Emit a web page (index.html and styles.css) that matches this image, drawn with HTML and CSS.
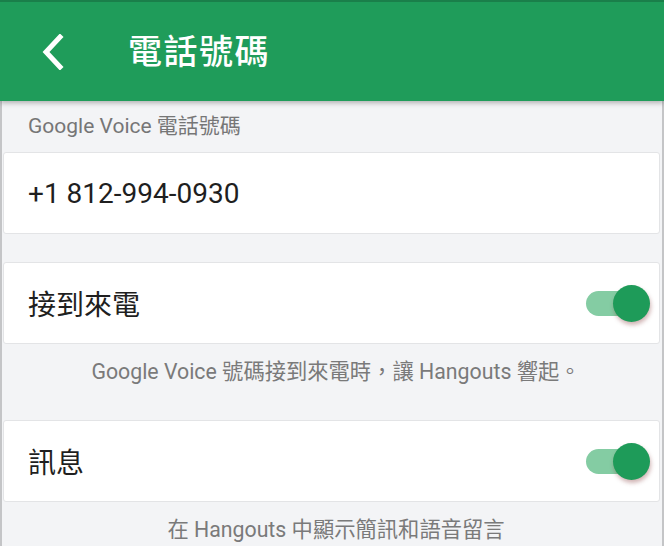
FILE: index.html
```html
<!DOCTYPE html>
<html lang="zh-Hant">
<head>
<meta charset="utf-8">
<title>電話號碼</title>
<link rel="stylesheet" href="styles.css">
</head>
<body>
<div class="page">
  <header class="appbar">
    <button class="back" aria-label="返回">
      <svg width="24" height="36" viewBox="0 0 24 36"><path d="M19 3 L5 18 L19 33" fill="none" stroke="#fff" stroke-width="5" stroke-linecap="square" stroke-linejoin="miter"/></svg>
    </button>
    <h1 class="title">電話號碼</h1>
  </header>
  <main class="content">
    <div class="section-label">Google Voice 電話號碼</div>
    <div class="card">
      <span class="card-text">+1 812-994-0930</span>
    </div>
    <div class="card card-gap">
      <span class="card-text">接到來電</span>
      <span class="toggle on"><span class="track"></span><span class="thumb"></span></span>
    </div>
    <div class="helper">Google Voice 號碼接到來電時，讓 Hangouts 響起。</div>
    <div class="card card-gap2">
      <span class="card-text">訊息</span>
      <span class="toggle on"><span class="track"></span><span class="thumb"></span></span>
    </div>
    <div class="helper">在 Hangouts 中顯示簡訊和語音留言</div>
  </main>
</div>
</body>
</html>
```
FILE: styles.css
```css
html, body {
  margin: 0;
  padding: 0;
  height: 100%;
}
body {
  background: #f3f4f6;
  font-family: Roboto, "Noto Sans CJK TC", sans-serif;
  overflow: hidden;
}
.page {
  height: 546px;
  border-left: 2px solid #c4c5c7;
  border-right: 2px solid #c4c5c7;
  box-sizing: border-box;
  background: #f3f4f6;
}
.appbar {
  height: 101px;
  box-sizing: border-box;
  background: #1f9c5a;
  border-top: 2px solid #1a7f4a;
  display: flex;
  align-items: center;
  box-shadow: 0 2px 5px rgba(0,0,0,0.28);
  position: relative;
  margin: 0 -2px;
}
.back {
  background: none;
  border: 0;
  padding: 0;
  margin-left: 41px;
  width: 24px;
  height: 36px;
  display: flex;
  align-items: center;
}
.title {
  margin: 0 0 0 63px;
  color: #fff;
  font-weight: 500;
  font-size: 34px;
  line-height: 40px;
  letter-spacing: 1.5px;
}
.content {
  padding: 13px 2px 0 1px;
}
.section-label {
  color: #767676;
  font-size: 21px;
  line-height: 24px;
  padding-left: 25px;
  margin-bottom: 14px;
}
.card {
  background: #fff;
  border: 1px solid #e3e4e6;
  border-radius: 3px;
  height: 82px;
  box-sizing: border-box;
  display: flex;
  align-items: center;
  justify-content: space-between;
  padding: 0 9px 0 24px;
}
.card-text {
  font-size: 28px;
  color: #1f1f1f;
}
.card-gap {
  margin-top: 28px;
}
.card-gap2 {
  margin-top: 36px;
}
.helper {
  text-align: center;
  color: #7a7a7a;
  font-size: 21.3px;
  line-height: 24px;
  margin-top: 16px;
  padding-left: 9px;
}
.toggle {
  position: relative;
  width: 64px;
  height: 37px;
  display: block;
}
.track {
  position: absolute;
  left: 0;
  top: 6px;
  width: 54px;
  height: 25px;
  border-radius: 13px;
  background: #84cca3;
}
.thumb {
  position: absolute;
  right: 0;
  top: 0;
  width: 37px;
  height: 37px;
  border-radius: 50%;
  background: #1e9b59;
  box-shadow: 1px 3px 4px rgba(120, 40, 40, 0.35);
}
```
